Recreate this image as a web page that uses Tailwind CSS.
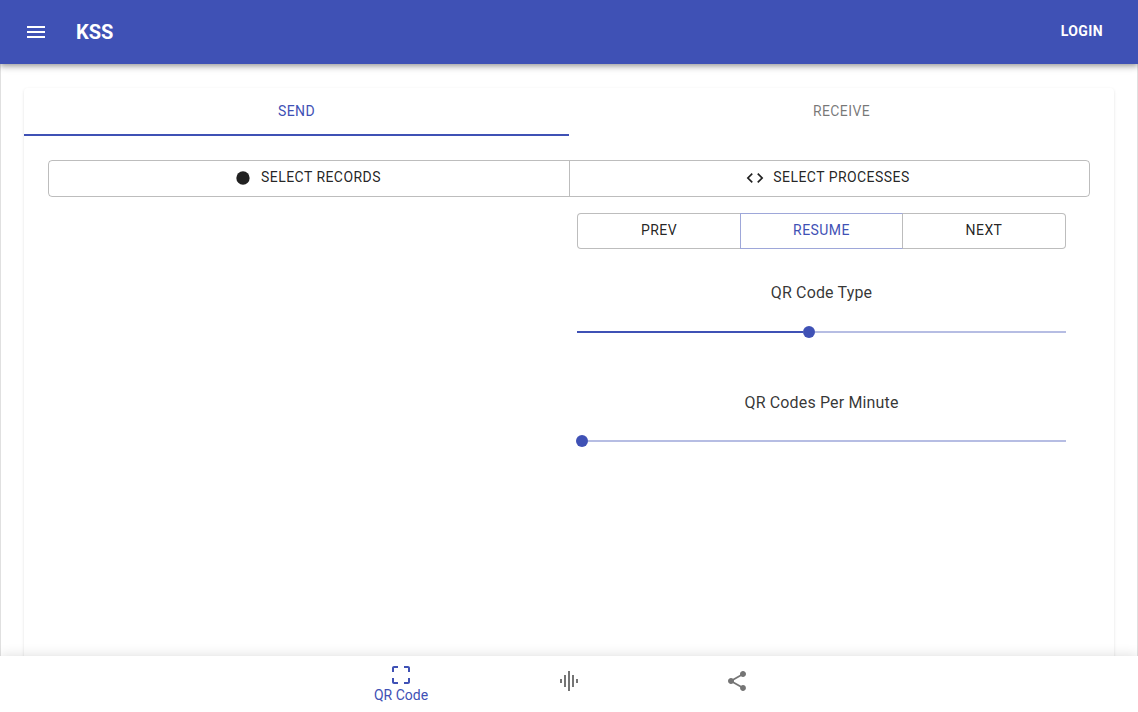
<!DOCTYPE html>
<html lang="en"><head><meta charset="utf-8"><title>KSS</title>
<script src="https://cdn.jsdelivr.net/npm/@tailwindcss/browser@4"></script></head>
<body class="h-[712px] overflow-hidden flex flex-col bg-white text-black/87 font-['Roboto',sans-serif]">
<header class="relative z-10 h-16 shrink-0 bg-[#3f51b5] text-white flex items-center pl-6 pr-[35px] shadow-[0_2px_4px_-1px_rgba(0,0,0,.2),0_4px_5px_0_rgba(0,0,0,.14),0_1px_10px_0_rgba(0,0,0,.12)]">
<svg class="size-6" viewBox="0 0 24 24" fill="currentColor"><path d="M3 18h18v-2H3v2zm0-5h18v-2H3v2zm0-7v2h18V6H3z"/></svg>
<h1 class="ml-7 text-xl font-bold">KSS</h1>
<button class="ml-auto text-sm font-bold -mt-0.5 tracking-[0.4px]">LOGIN</button>
</header>
<main class="flex-1 min-h-0 overflow-hidden border-x border-black/12 px-[23px] pt-6">
<section class="h-[600px] rounded shadow-[0_1px_3px_rgba(0,0,0,.12)]">
<nav class="grid grid-cols-2 h-12 text-sm leading-6 font-[450] tracking-[0.4px]">
<button class="border-b-2 border-[#3f51b5] text-[#3f51b5]">SEND</button>
<button class="border-b-2 border-transparent text-black/54">RECEIVE</button>
</nav>
<div class="p-6">
<div class="grid grid-cols-[521px_1fr] h-[37px] border border-black/26 rounded text-sm font-[450] tracking-[0.44px]">
<button class="border-r border-black/26 flex items-center justify-center gap-2 pb-[3px]"><svg class="size-5 mt-0.5 -ml-1" viewBox="0 0 24 24" fill="currentColor"><circle cx="12" cy="12" r="8"/></svg>SELECT RECORDS</button>
<button class="flex items-center justify-center gap-2 pb-[3px]"><svg class="size-5 mt-0.5 -ml-1" viewBox="0 0 24 24" fill="currentColor"><path d="M9.4 16.6L4.8 12l4.6-4.6L8 6l-6 6 6 6 1.4-1.4zm5.2 0l4.6-4.6-4.6-4.6L16 6l6 6-6 6-1.4-1.4z"/></svg>SELECT PROCESSES</button>
</div>
<div class="ml-auto mr-6 mt-4 w-[489px] text-center">
<div class="grid grid-cols-[163px_163px_163px] h-9 text-sm font-[450] tracking-[0.44px]">
<button class="border border-r-0 border-black/26 rounded-l pb-0.5">PREV</button><button class="border border-[#3f51b5]/50 border-r-black/26 text-[#3f51b5] pb-0.5">RESUME</button><button class="border border-l-0 border-black/26 rounded-r pb-0.5">NEXT</button>
</div>
<p class="mt-8 h-6 leading-6 text-black/80 tracking-[0.15px]">QR Code Type</p>
<div class="mt-[21px] h-3 flex items-center"><div class="w-[226px] h-0.5 bg-[#3f51b5]"></div><div class="size-3 rounded-full bg-[#3f51b5]"></div><div class="flex-1 h-0.5 bg-[#3f51b5]/38"></div></div>
<p class="mt-[53px] h-6 leading-6 text-black/80 tracking-[0.15px]">QR Codes Per Minute</p>
<div class="mt-5 h-3 -ml-px flex items-center"><div class="size-3 rounded-full bg-[#3f51b5]"></div><div class="flex-1 h-0.5 bg-[#3f51b5]/38"></div></div>
</div></div></section></main>
<footer class="relative z-10 h-14 shrink-0 bg-white flex justify-center text-[#757575] shadow-[0_0_12px_rgba(0,0,0,.14)]">
<button class="w-[168px] flex flex-col items-center pt-[7px] text-[#3f51b5]"><svg class="size-6" viewBox="0 0 24 24" fill="currentColor"><path d="M3 5v4h2V5h4V3H5c-1.1 0-2 .9-2 2zm2 10H3v4c0 1.1.9 2 2 2h4v-2H5v-4zm14 4h-4v2h4c1.1 0 2-.9 2-2v-4h-2v4zm0-16h-4v2h4v4h2V5c0-1.1-.9-2-2-2z"/></svg><span class="text-sm leading-4">QR Code</span></button>
<button class="w-[168px] flex justify-center pt-[13px]"><svg class="size-6" viewBox="0 0 24 24" fill="currentColor"><path d="M7 18h2V6H7v12zm4 4h2V2h-2v20zm-8-8h2v-4H3v4zm12 4h2V6h-2v12zm4-8v4h2v-4h-2z"/></svg></button>
<button class="w-[168px] flex justify-center pt-[13px]"><svg class="size-6" viewBox="0 0 24 24" fill="currentColor"><path d="M18 16.08c-.76 0-1.44.3-1.96.77L8.91 12.7c.05-.23.09-.46.09-.7s-.04-.47-.09-.7l7.05-4.11c.54.5 1.25.81 2.04.81 1.66 0 3-1.34 3-3s-1.34-3-3-3-3 1.34-3 3c0 .24.04.47.09.7L8.04 9.81C7.5 9.31 6.79 9 6 9c-1.66 0-3 1.34-3 3s1.34 3 3 3c.79 0 1.5-.31 2.04-.81l7.12 4.16c-.05.21-.08.43-.08.65 0 1.61 1.31 2.92 2.92 2.92s2.92-1.31 2.92-2.92-1.31-2.92-2.92-2.92z"/></svg></button>
</footer></body></html>
